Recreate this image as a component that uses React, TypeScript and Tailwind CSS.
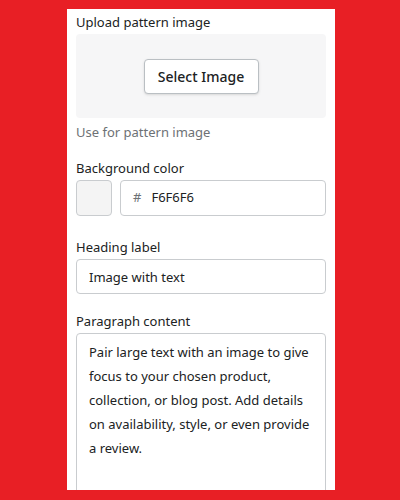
import React, { useState } from 'react';

const App: React.FC = () => {
    const [color, setColor] = useState('F6F6F6');
    const [heading, setHeading] = useState('Image with text');
    const [paragraph, setParagraph] = useState(
        'Pair large text with an image to give focus to your chosen product, collection, or blog post. Add details on availability, style, or even provide a review.'
    );

    return (
        <div
            className="w-[400px] h-[500px] bg-[#e81f25] pt-[9px] pl-[67px]"
            style={{ fontFamily: '"Segoe UI", "Noto Sans", sans-serif' }}
        >
            <div className="w-[268px] h-[481px] bg-white overflow-hidden px-[9px] text-[13px] text-[#202223]">
                {/* Upload pattern image */}
                <div className="leading-[24px] pt-[1px]">Upload pattern image</div>
                <div className="h-[84px] rounded bg-[#f6f6f7] flex items-center justify-center">
                    <button className="w-[115px] h-[35px] bg-white border border-[#babfc3] rounded text-[14px] font-medium text-[#202223] shadow-sm">
                        Select Image
                    </button>
                </div>
                <div className="leading-[20px] mt-[4px] text-[#6d7175]">Use for pattern image</div>

                {/* Background color */}
                <div className="leading-[20px] mt-[16px] mb-[2px]">Background color</div>
                <div className="flex gap-2">
                    <div className="w-9 h-9 shrink-0 rounded border border-[#c9cccf] bg-[#f4f4f4]" />
                    <div className="flex-1 min-w-0 h-9 rounded border border-[#c9cccf] flex items-center pl-3">
                        <span className="text-[#6d7175] mr-[10px]">#</span>
                        <input
                            value={color}
                            onChange={e => setColor(e.target.value)}
                            className="flex-1 min-w-0 outline-none bg-transparent text-[#202223]"
                        />
                    </div>
                </div>

                {/* Heading label */}
                <div className="leading-[20px] mt-[21px] mb-[2px]">Heading label</div>
                <input
                    value={heading}
                    onChange={e => setHeading(e.target.value)}
                    className="w-full h-[35px] rounded border border-[#c9cccf] px-3 outline-none"
                />

                {/* Paragraph content */}
                <div className="leading-[20px] mt-[17px] mb-[2px]">Paragraph content</div>
                <textarea
                    value={paragraph}
                    onChange={e => setParagraph(e.target.value)}
                    className="w-full h-[200px] rounded border border-[#c9cccf] px-3 pt-[6px] leading-[24px] outline-none resize-none"
                />
            </div>
        </div>
    );
};

export default App;
